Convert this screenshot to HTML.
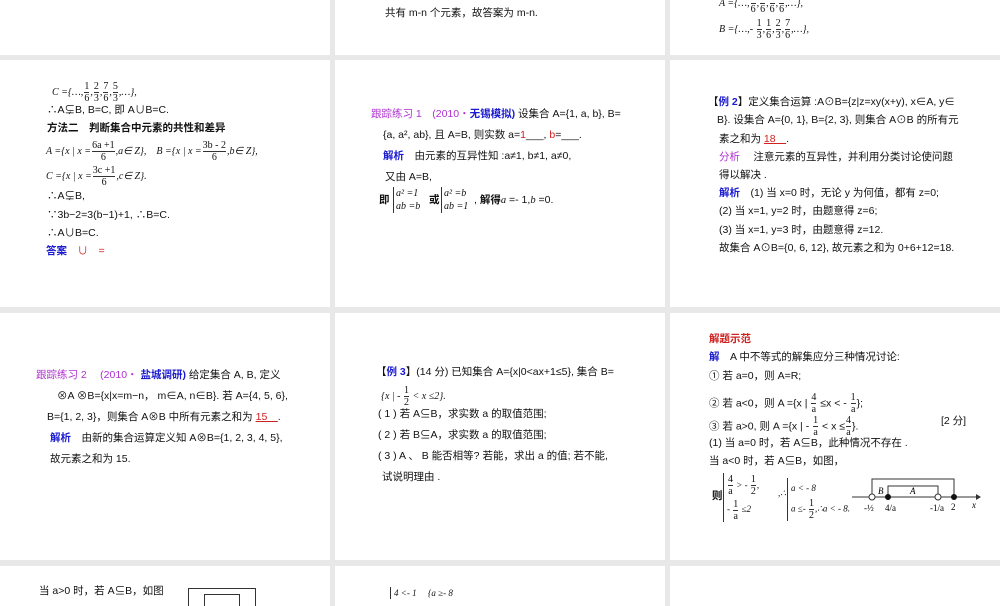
<!DOCTYPE html><html><head><meta charset="utf-8"><style>
body{margin:0;width:1000px;height:600px;background:#e8e8e8;position:relative;overflow:hidden;font-family:"Liberation Sans","Noto Sans CJK SC",sans-serif;font-size:10.5px;color:#111}
.p{position:absolute;background:#fff;overflow:hidden}
.t{position:absolute;white-space:nowrap;line-height:12px}
.b{color:#1a1ad0;font-weight:bold}.m{color:#b030d0}.r{color:#d02020}
.s{font-family:"Liberation Serif",serif;font-style:italic}
.f{display:inline-block;vertical-align:middle;text-align:center;font-size:10px;line-height:11px;font-family:"Liberation Serif",serif;font-style:normal;margin:0 1px}
.f span{display:block}.f span:first-child{border-bottom:1px solid #333}
</style></head><body>
<div class="p" style="left:0;top:0;width:330px;height:55px"></div>
<div class="p" style="left:335px;top:0;width:330px;height:55px">
<div class="t" style="left:50px;top:7px">共有 m-n 个元素，故答案为 m-n.</div></div>
<div class="p" style="left:670px;top:0;width:330px;height:55px">
<div class="t s" style="left:49px;top:-8px;font-size:10px">A ={…,<span class="f"><span>-</span><span>6</span></span>,<span class="f"><span>-</span><span>6</span></span>,<span class="f"><span>-</span><span>6</span></span>,<span class="f"><span>-</span><span>6</span></span>,…},</div>
<div class="t s" style="left:49px;top:18px;font-size:10px">B ={…,- <span class="f"><span>1</span><span>3</span></span>,<span class="f"><span>1</span><span>6</span></span>,<span class="f"><span>2</span><span>3</span></span>,<span class="f"><span>7</span><span>6</span></span>,…},</div></div>

<div class="p" style="left:0;top:60px;width:330px;height:247px">
<div class="t s" style="left:52px;top:21px;font-size:10px">C ={…,<span class="f"><span>1</span><span>6</span></span>,<span class="f"><span>2</span><span>3</span></span>,<span class="f"><span>7</span><span>6</span></span>,<span class="f"><span>5</span><span>3</span></span>,…},</div>
<div class="t" style="left:47px;top:44px">∴A⊊B, B=C, 即 A∪B=C.</div>
<div class="t" style="left:47px;top:62px;font-weight:bold">方法二　判断集合中元素的共性和差异</div>
<div class="t s" style="left:46px;top:80px;font-size:10px">A ={x | x =<span class="f"><span>6a +1</span><span>6</span></span>,a∈ Z},　B ={x | x =<span class="f"><span>3b - 2</span><span>6</span></span>,b∈ Z},</div>
<div class="t s" style="left:46px;top:105px;font-size:10px">C ={x | x =<span class="f"><span>3c +1</span><span>6</span></span>,c∈ Z}.</div>
<div class="t" style="left:47px;top:130px">∴A⊊B,</div>
<div class="t" style="left:47px;top:149px">∵3b−2=3(b−1)+1, ∴B=C.</div>
<div class="t" style="left:47px;top:167px">∴A∪B=C.</div>
<div class="t" style="left:46px;top:185px"><span class="b">答案</span>　<span class="r">∪　=</span></div></div>

<div class="p" style="left:335px;top:60px;width:330px;height:247px">
<div class="t" style="left:36px;top:48px"><span class="m">跟踪练习 1　(2010・</span><span class="b">无锡模拟</span><span class="b">)</span> 设集合 A={1, a, b}, B=</div>
<div class="t" style="left:48px;top:69px">{a, a², ab}, 且 A=B, 则实数 a=<span class="r">1</span>___, <span class="r">b</span>=___.</div>
<div class="t" style="left:48px;top:90px"><span class="b">解析</span>　由元素的互异性知 :a≠1, b≠1, a≠0,</div>
<div class="t" style="left:50px;top:111px">又由 A=B,</div>
<div class="t" style="left:44px;top:134px;font-weight:bold">即</div>
<div class="t s" style="left:58px;top:127px;font-size:10px;line-height:13px;border-left:1px solid #333;padding-left:2px">a² =1<br>ab =b</div>
<div class="t" style="left:94px;top:134px;font-weight:bold">或</div>
<div class="t s" style="left:106px;top:127px;font-size:10px;line-height:13px;border-left:1px solid #333;padding-left:2px">a² =b<br>ab =1</div>
<div class="t" style="left:139px;top:134px">, <b>解得</b><span class="s">a</span> =- 1,<span class="s">b</span> =0.</div></div>

<div class="p" style="left:670px;top:60px;width:330px;height:247px">
<div class="t" style="left:38px;top:36px">【<span class="b">例 2</span>】定义集合运算 :A⊙B={z|z=xy(x+y), x∈A, y∈</div>
<div class="t" style="left:47px;top:54px">B}. 设集合 A={0, 1}, B={2, 3}, 则集合 A⊙B 的所有元</div>
<div class="t" style="left:49px;top:73px">素之和为 <span class="r" style="text-decoration:underline">18　</span>.</div>
<div class="t" style="left:49px;top:91px"><span class="m">分析</span>　 注意元素的互异性，并利用分类讨论使问题</div>
<div class="t" style="left:49px;top:109px">得以解决 .</div>
<div class="t" style="left:49px;top:127px"><span class="b">解析</span>　(1) 当 x=0 时，无论 y 为何值，都有 z=0;</div>
<div class="t" style="left:49px;top:145px">(2) 当 x=1, y=2 时，由题意得 z=6;</div>
<div class="t" style="left:49px;top:164px">(3) 当 x=1, y=3 时，由题意得 z=12.</div>
<div class="t" style="left:49px;top:182px">故集合 A⊙B={0, 6, 12}, 故元素之和为 0+6+12=18.</div></div>

<div class="p" style="left:0;top:313px;width:330px;height:247px">
<div class="t" style="left:36px;top:56px"><span class="m">跟踪练习 2　 (2010・ </span><span class="b">盐城调研)</span> 给定集合 A, B, 定义</div>
<div class="t" style="left:57px;top:77px">⊗A ⊗B={x|x=m−n， m∈A, n∈B}. 若 A={4, 5, 6},</div>
<div class="t" style="left:47px;top:98px">B={1, 2, 3}，则集合 A⊗B 中所有元素之和为 <span class="r" style="text-decoration:underline">15　</span>.</div>
<div class="t" style="left:50px;top:119px"><span class="b">解析</span>　由新的集合运算定义知 A⊗B={1, 2, 3, 4, 5},</div>
<div class="t" style="left:50px;top:140px">故元素之和为 15.</div></div>

<div class="p" style="left:335px;top:313px;width:330px;height:247px">
<div class="t" style="left:41px;top:53px">【<span class="b">例 3</span>】(14 分) 已知集合 A={x|0&lt;ax+1≤5}, 集合 B=</div>
<div class="t s" style="left:46px;top:72px;font-size:10px">{x | - <span class="f"><span>1</span><span>2</span></span> &lt; x ≤2}.</div>
<div class="t" style="left:43px;top:95px">( 1 ) 若 A⊆B，求实数 a 的取值范围;</div>
<div class="t" style="left:43px;top:116px">( 2 ) 若 B⊆A，求实数 a 的取值范围;</div>
<div class="t" style="left:43px;top:137px">( 3 )  A 、 B 能否相等? 若能，求出 a 的值; 若不能,</div>
<div class="t" style="left:47px;top:158px">试说明理由 .</div></div>

<div class="p" style="left:670px;top:313px;width:330px;height:247px">
<div class="t r" style="left:39px;top:20px;font-weight:bold">解题示范</div>
<div class="t" style="left:39px;top:38px"><span class="b">解</span>　A 中不等式的解集应分三种情况讨论:</div>
<div class="t" style="left:39px;top:57px">① 若 a=0，则 A=R;</div>
<div class="t" style="left:39px;top:79px">② 若 a&lt;0，则 A ={x | <span class="f"><span>4</span><span>a</span></span> ≤x &lt; - <span class="f"><span>1</span><span>a</span></span>};</div>
<div class="t" style="left:39px;top:102px">③ 若 a&gt;0, 则 A ={x | - <span class="f"><span>1</span><span>a</span></span> &lt; x ≤<span class="f"><span>4</span><span>a</span></span>}.</div>
<div class="t" style="left:271px;top:102px">[2 分]</div>
<div class="t" style="left:39px;top:124px">(1) 当 a=0 时，若 A⊆B，此种情况不存在 .</div>
<div class="t" style="left:39px;top:142px">当 a&lt;0 时，若 A⊆B，如图，</div>
<div class="t" style="left:42px;top:177px;font-weight:bold">则</div>
<div class="t s" style="left:53px;top:160px;font-size:9px;line-height:24px;border-left:1px solid #333;padding-left:3px"><span class="f"><span>4</span><span>a</span></span> &gt; - <span class="f"><span>1</span><span>2</span></span>,<br>- <span class="f"><span>1</span><span>a</span></span> ≤2</div>
<div class="t s" style="left:108px;top:174px;font-size:9px">,∴</div>
<div class="t s" style="left:117px;top:165px;font-size:9px;line-height:20px;border-left:1px solid #333;padding-left:3px">a &lt; - 8<br>a ≤- <span class="f"><span>1</span><span>2</span></span>,∴a &lt; - 8.</div>
<svg style="position:absolute;left:180px;top:150px" width="150" height="60">
<line x1="2" y1="34" x2="130" y2="34" stroke="#333"/><path d="M126 31 L131 34 L126 37" fill="#333"/>
<path d="M22 34 V16 H104 V34" fill="none" stroke="#333"/><path d="M38 34 V23 H88 V34" fill="none" stroke="#333"/>
<circle cx="22" cy="34" r="3" fill="#fff" stroke="#333"/><circle cx="38" cy="34" r="3" fill="#111"/>
<circle cx="88" cy="34" r="3" fill="#fff" stroke="#333"/><circle cx="104" cy="34" r="3" fill="#111"/>
<text x="28" y="31" font-size="9" font-style="italic" font-family="Liberation Serif">B</text>
<text x="60" y="31" font-size="9" font-style="italic" font-family="Liberation Serif">A</text>
<text x="14" y="48" font-size="9" font-family="Liberation Serif">-½</text>
<text x="35" y="48" font-size="9" font-family="Liberation Serif">4/a</text>
<text x="80" y="48" font-size="9" font-family="Liberation Serif">-1/a</text>
<text x="101" y="47" font-size="9" font-family="Liberation Serif">2</text>
<text x="122" y="45" font-size="9" font-style="italic" font-family="Liberation Serif">x</text></svg></div>

<div class="p" style="left:0;top:566px;width:330px;height:40px">
<div class="t" style="left:39px;top:19px">当 a&gt;0 时，若 A⊆B，如图</div>
<div style="position:absolute;left:188px;top:22px;width:66px;height:20px;border:1px solid #333"></div>
<div style="position:absolute;left:204px;top:28px;width:34px;height:20px;border:1px solid #333"></div></div>
<div class="p" style="left:335px;top:566px;width:330px;height:40px">
<div class="t s" style="left:55px;top:21px;font-size:9px;border-left:1px solid #333;padding-left:3px">4 &lt;- 1　 {a ≥- 8</div></div>
<div class="p" style="left:670px;top:566px;width:330px;height:40px"></div>
</body></html>
